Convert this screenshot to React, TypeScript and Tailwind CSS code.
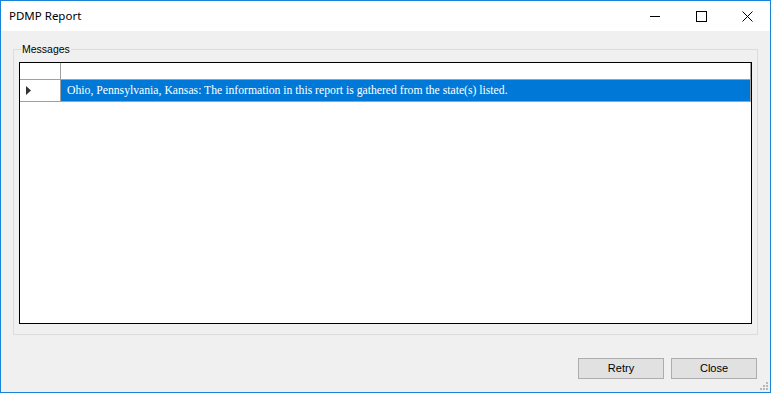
import React from "react";

export default function App() {
  return (
    <div className="w-[771px] h-[393px] border border-[#1883d7] bg-[#f0f0f0] flex flex-col relative overflow-hidden">
      {/* Title bar */}
      <div className="h-[30px] bg-white flex items-center shrink-0">
        <span
          className="ml-[8px] text-[11.5px] text-black"
          style={{ fontFamily: '"Noto Sans", "Open Sans", sans-serif' }}
        >
          PDMP Report
        </span>
        <div className="ml-auto flex h-full">
          <div className="w-[46px] h-full flex items-center justify-center">
            <svg width="10" height="10" viewBox="0 0 10 10">
              <line x1="0" y1="5.5" x2="10" y2="5.5" stroke="#000" strokeWidth="1" />
            </svg>
          </div>
          <div className="w-[46px] h-full flex items-center justify-center">
            <svg width="11" height="11" viewBox="0 0 11 11">
              <rect x="0.5" y="0.5" width="10" height="10" fill="none" stroke="#000" strokeWidth="1" />
            </svg>
          </div>
          <div className="w-[46px] h-full flex items-center justify-center">
            <svg width="11" height="11" viewBox="0 0 11 11">
              <line x1="0.5" y1="0.5" x2="10.5" y2="10.5" stroke="#000" strokeWidth="1" />
              <line x1="10.5" y1="0.5" x2="0.5" y2="10.5" stroke="#000" strokeWidth="1" />
            </svg>
          </div>
        </div>
      </div>

      {/* Body */}
      <div className="flex-1 flex flex-col">
        <div className="mx-[12px] mt-[18px] h-[286px] border border-[#dcdcdc] relative pt-[12px] px-[5px] pb-[10px]">
          <span
            className="absolute top-[-8px] left-[7px] bg-[#f0f0f0] px-[1px] text-[10.5px] leading-[14px] text-black"
            style={{ fontFamily: '"Liberation Sans", Arial, sans-serif' }}
          >
            Messages
          </span>
          <div className="h-full border border-black bg-white flex flex-col">
            <div className="flex h-[17px] border-b border-[#a0a0a0]">
              <div className="w-[41px] border-r border-[#a0a0a0]" />
              <div className="flex-1 border-r border-[#a0a0a0]" />
            </div>
            <div className="flex h-[22px] border-b border-[#a0a0a0]">
              <div className="w-[41px] border-r border-[#a0a0a0] flex items-center pl-[6px]">
                <svg width="5" height="9" viewBox="0 0 5 9">
                  <polygon points="0,0 5,4.5 0,9" fill="#333" />
                </svg>
              </div>
              <div
                className="flex-1 bg-[#0078d7] border-r border-[#a0a0a0] text-white text-[11.7px] flex items-center pl-[6px] whitespace-nowrap"
                style={{ fontFamily: '"Liberation Serif", "Times New Roman", serif' }}
              >
                Ohio, Pennsylvania, Kansas: The information in this report is gathered from the state(s) listed.
              </div>
            </div>
          </div>
        </div>

        <div
          className="flex justify-end gap-[7px] mt-[23px] pr-[13px]"
          style={{ fontFamily: '"Liberation Sans", Arial, sans-serif' }}
        >
          <button className="w-[86px] h-[21px] border border-[#adadad] bg-[#e1e1e1] text-[11px] text-black">
            Retry
          </button>
          <button className="w-[86px] h-[21px] border border-[#adadad] bg-[#e1e1e1] text-[11px] text-black">
            Close
          </button>
        </div>
      </div>

      {/* Size grip */}
      <div className="absolute right-[1px] bottom-[1px]">
        <svg width="10" height="10" viewBox="0 0 10 10">
          <rect x="7" y="1" width="2" height="2" fill="#b8b8b8" />
          <rect x="4" y="4" width="2" height="2" fill="#b8b8b8" />
          <rect x="7" y="4" width="2" height="2" fill="#b8b8b8" />
          <rect x="1" y="7" width="2" height="2" fill="#b8b8b8" />
          <rect x="4" y="7" width="2" height="2" fill="#b8b8b8" />
          <rect x="7" y="7" width="2" height="2" fill="#b8b8b8" />
        </svg>
      </div>
    </div>
  );
}
